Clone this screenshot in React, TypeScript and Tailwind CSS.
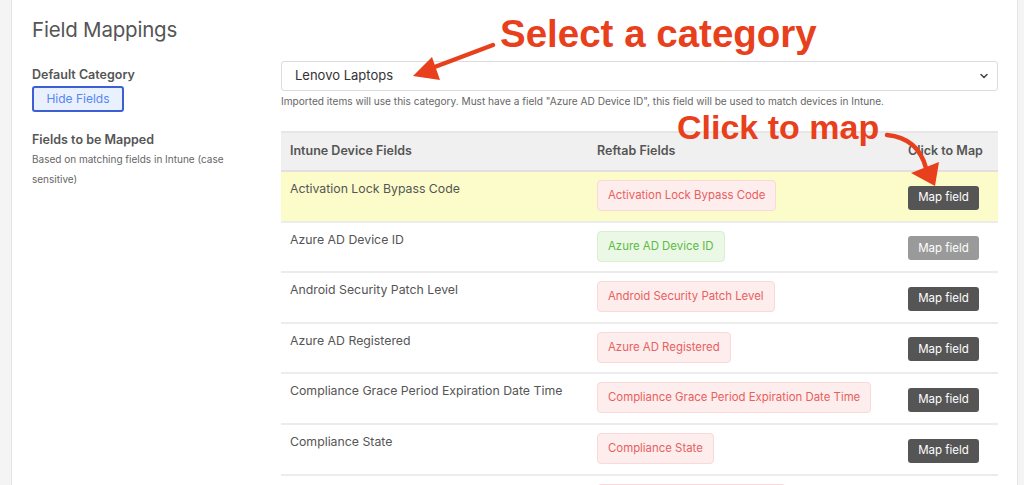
import { ChevronDown } from "lucide-react";

type Row = {
  name: string,
  mapped: boolean,
  active?: boolean,
}

const rows: Row[] = [
  { name: "Activation Lock Bypass Code", mapped: false, active: true },
  { name: "Azure AD Device ID", mapped: true },
  { name: "Android Security Patch Level", mapped: false },
  { name: "Azure AD Registered", mapped: false },
  { name: "Compliance Grace Period Expiration Date Time", mapped: false },
  { name: "Compliance State", mapped: false },
  { name: "Device Category Display Name", mapped: false },
];

function FieldRow({ row }: { row: Row }) {
  return (
    <div
      className={
        "grid grid-cols-[307px_311px_1fr] h-[48.6px] box-content border-b-2 border-[#ececec] " +
        (row.active ? "bg-[#fbfcc9]" : "bg-white")
      }
    >
      <div className="pl-[9px] pt-[8px] text-[12.3px] leading-[17px] text-[#555]">{row.name}</div>
      <div className="pl-[9px] pt-[8px]">
        {row.mapped ? (
          <span className="inline-block h-[31px] px-[10px] leading-[29px] text-[11.4px] rounded-[4px] border border-[#d7f0cd] bg-[#ebf8e6] text-[#5cba45]">
            {row.name}
          </span>
        ) : (
          <span className="inline-block h-[31px] px-[10px] leading-[29px] text-[11.4px] rounded-[4px] border border-[#f9d9d9] bg-[#fdeded] text-[#e8605e]">
            {row.name}
          </span>
        )}
      </div>
      <div className="pl-[9px] pt-[11px]">
        <button
          className={
            "h-[24px] w-[71px] rounded-[3px] text-[11.5px] text-white " +
            (row.mapped ? "bg-[#9a9a9a]" : "bg-[#555555]")
          }
        >
          Map field
        </button>
      </div>
    </div>
  );
}

export default function App() {
  return (
    <div
      className="flex h-[485px] w-[1024px] overflow-hidden bg-[#f4f4f4]"
      style={{ fontFamily: "Inter, 'Liberation Sans', sans-serif" }}
    >
      <div className="relative ml-[11px] mr-[6px] flex-1 bg-white border-l border-r border-[#e4e4e4] pl-[20px] pr-[19px] pt-[16px]">
        <h1 className="text-[20.5px] leading-[28px] text-[#555] tracking-[-0.2px]">Field Mappings</h1>

        <div className="mt-[17px] flex">
          <div className="w-[249px] shrink-0 pt-[6px] pr-[16px]">
            <div className="text-[12.5px] font-semibold leading-[16px] text-[#555]">Default Category</div>
            <button className="mt-[3px] h-[26px] w-[92px] rounded-[3px] border-2 border-[#3d5fd6] bg-[#e9f1fe] text-[12px] text-[#5786f2]">
              Hide Fields
            </button>
            <div className="mt-[20px] text-[12.5px] font-semibold leading-[16px] text-[#555]">Fields to be Mapped</div>
            <p className="mt-[1px] text-[10px] leading-[20px] text-[#666] pr-[4px]">
              Based on matching fields in Intune (case sensitive)
            </p>
          </div>

          <div className="flex-1">
            <div className="relative flex h-[30px] items-center rounded-[3px] border border-[#dcdcdc] bg-white pl-[13px] text-[13px] text-[#333]">
              Lenovo Laptops
              <ChevronDown className="absolute right-[7px] top-[8px] text-[#444]" size={12} strokeWidth={3} />
            </div>
            <p className="mt-[3px] text-[10.1px] leading-[14px] text-[#666]">
              Imported items will use this category. Must have a field "Azure AD Device ID", this field will be used to match devices in Intune.
            </p>

            <div className="mt-[23px] border-t-2 border-[#e6e6e6]">
              <div className="grid grid-cols-[307px_311px_1fr] h-[37px] box-content items-center bg-[#f0f0f0] border-b-2 border-[#e0e0e0] text-[12.5px] font-semibold text-[#555]">
                <div className="pl-[9px]">Intune Device Fields</div>
                <div className="pl-[9px]">Reftab Fields</div>
                <div className="pl-[9px]">Click to Map</div>
              </div>
              {rows.map((row) => (
                <FieldRow key={row.name} row={row} />
              ))}
            </div>
          </div>
        </div>

        {/* annotations drawn over the screenshot */}
        <div
          className="absolute left-[488px] top-[12px] text-[38.5px] font-bold leading-[44px] text-[#e8401c]"
          style={{ fontFamily: "'Liberation Sans', Arial, sans-serif" }}
        >
          Select a category
        </div>
        <div
          className="absolute left-[665px] top-[107px] text-[34px] font-bold leading-[40px] text-[#e8401c]"
          style={{ fontFamily: "'Liberation Sans', Arial, sans-serif" }}
        >
          Click to map
        </div>
        <svg className="absolute left-[-12px] top-0 pointer-events-none" width="1024" height="485" viewBox="0 0 1024 485">
          <line x1="493" y1="45" x2="432" y2="68" stroke="#e8401c" strokeWidth="4.5" strokeLinecap="round" />
          <polygon points="413,76 432,57 440,80" fill="#e8401c" />
          <path d="M887 135 Q 918 138 926 168" fill="none" stroke="#e8401c" strokeWidth="4.5" strokeLinecap="round" />
          <polygon points="935,186 911,173 939,162" fill="#e8401c" />
        </svg>
      </div>
    </div>
  );
}
